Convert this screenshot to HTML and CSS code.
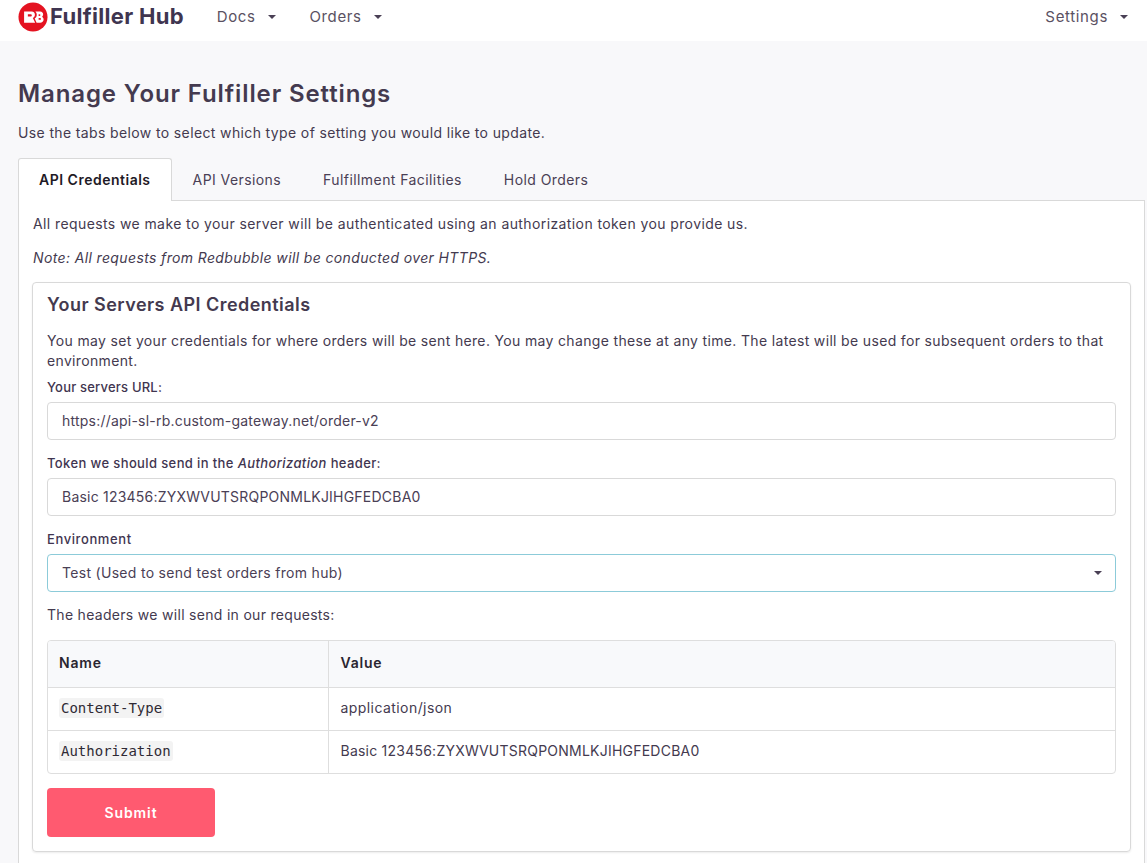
FILE: index.html
```html
<!DOCTYPE html>
<html lang="en">
<head>
<meta charset="utf-8">
<title>Fulfiller Hub</title>
<link rel="stylesheet" href="styles.css">
</head>
<body>
<nav class="navbar">
  <a class="brand">
    <svg class="logo" viewBox="0 0 32 32" aria-hidden="true"><circle cx="16" cy="16" r="15.5" fill="#e41321"/><path fill="#fff" fill-rule="evenodd" d="M6.500 10H14.500C17 10 18 11.800 18 13.500C18 15.300 17 16.500 15.800 17L18.300 22H6.500ZM10.500 13V15.500H13.500A1.250 1.250 0 0 0 13.500 13Z"/><path fill="#fff" fill-rule="evenodd" d="M18.500 10H23.500C25.800 10 26.800 11.500 26.800 13C26.800 14.300 26.300 15.300 25.500 15.800C26.600 16.400 27.300 17.500 27.300 18.600C27.300 20.600 25.800 22 23.500 22H19.800L17.800 17.600C19.300 16.600 20 15.200 20 13.500C20 12 19.500 11 18.500 10ZM22 13V14.800H23A.9.9 0 0 0 23 13ZM22 17V19H23.500A1 1 0 0 0 23.500 17Z"/></svg>
    <span>Fulfiller Hub</span>
  </a>
  <a class="nav-link">Docs<i class="caret"></i></a>
  <a class="nav-link">Orders<i class="caret"></i></a>
  <a class="nav-link nav-end">Settings<i class="caret"></i></a>
</nav>
<main class="page">
  <h1>Manage Your Fulfiller Settings</h1>
  <p class="lead">Use the tabs below to select which type of setting you would like to update.</p>
  <ul class="tabs">
    <li class="tab active">API Credentials</li>
    <li class="tab">API Versions</li>
    <li class="tab">Fulfillment Facilities</li>
    <li class="tab">Hold Orders</li>
  </ul>
  <section class="tab-pane">
    <p class="intro">All requests we make to your server will be authenticated using an authorization token you provide us.</p>
    <p class="intro"><em>Note: All requests from Redbubble will be conducted over HTTPS.</em></p>
    <div class="card">
      <h2>Your Servers API Credentials</h2>
      <p class="card-text">You may set your credentials for where orders will be sent here. You may change these at any time. The latest will be used for subsequent orders to that environment.</p>
      <label class="label first">Your servers URL:</label>
      <div class="input">https://api-sl-rb.custom-gateway.net/order-v2</div>
      <label class="label">Token we should send in the <em>Authorization</em> header:</label>
      <div class="input">Basic 123456:ZYXWVUTSRQPONMLKJIHGFEDCBA0</div>
      <label class="label env">Environment</label>
      <div class="input select">Test (Used to send test orders from hub)<i class="caret small"></i></div>
      <p class="headers-note">The headers we will send in our requests:</p>
      <div class="table-wrap">
        <table>
          <thead><tr><th class="col-name">Name</th><th>Value</th></tr></thead>
          <tbody>
            <tr><td><code>Content-Type</code></td><td class="wide">application/json</td></tr>
            <tr><td><code>Authorization</code></td><td>Basic 123456:ZYXWVUTSRQPONMLKJIHGFEDCBA0</td></tr>
          </tbody>
        </table>
      </div>
      <button class="submit" type="button">Submit</button>
    </div>
  </section>
</main>
</body>
</html>
```
FILE: styles.css
```css
* { box-sizing: border-box; }
html, body { margin: 0; padding: 0; }
body {
  background: #f8f8fa;
  color: #443a4f;
  font-family: "Inter", "Liberation Sans", sans-serif;
  font-size: 14px;
  line-height: 21px;
  letter-spacing: 0.37px;
  height: 863px;
  overflow: hidden;
}
.navbar {
  height: 41px;
  background: #fff;
  display: flex;
  align-items: center;
  padding: 0 19px 8px 18px;
}
.brand { display: flex; align-items: center; gap: 2px; font-weight: 700; font-size: 22px; color: #3f3550; margin-right: 33px; letter-spacing: 0.3px; }
.logo { width: 30px; height: 30px; }
.nav-link { display: flex; align-items: center; font-size: 15px; color: #5a5162; margin-right: 34px; letter-spacing: 0.6px; }
.nav-end { margin-left: auto; margin-right: 0; letter-spacing: 0.65px; }
.caret { display: inline-block; width: 0; height: 0; margin-left: 12px; border-left: 4.500px solid transparent; border-right: 4.500px solid transparent; border-top: 4.500px solid #4a4055; }
.page { padding: 0 2px 0 18px; }
h1 { margin: 38px 0 0; font-size: 24px; line-height: 30px; font-weight: 600; color: #443a4f; letter-spacing: 0.88px; }
.lead { margin: 13px 0 0; line-height: 22px; }
.tabs { list-style: none; margin: 14px 0 0; padding: 0; display: flex; height: 43px; border-bottom: 1px solid #d9d9d9; }
.tab { padding: 10px 20px; border: 1px solid transparent; border-bottom: 0; color: #4a4055; letter-spacing: 0.42px; }
.tab.active { background: #fff; border-color: #d9d9d9; border-radius: 3px 3px 0 0; height: 43px; font-weight: 600; color: #1f1a26; letter-spacing: 0.5px; }
.tab-pane { background: #fff; border: 1px solid #d9d9d9; border-top: 0; padding: 12px 13px 0; height: 700px; }
.intro { margin: 0 0 13px 1px; letter-spacing: 0.4px; }
.intro + .intro { margin-bottom: 14px; letter-spacing: 0.37px; }
.card { border: 1px solid #d9d9d9; border-radius: 4px; box-shadow: 0 1px 2px rgba(0,0,0,.08); padding: 10px 14px 14px; }
h2 { margin: 0; font-size: 18px; line-height: 24px; font-weight: 600; color: #443a4f; letter-spacing: 0.46px; }
.card-text { margin: 14px 0 0; line-height: 20px; letter-spacing: 0.34px; }
.label { display: block; font-size: 13px; font-weight: 500; line-height: 20px; margin-top: 13px; color: #3f3550; letter-spacing: 0.38px; }
.label.first { margin-top: 6px; letter-spacing: 0.2px; }
.label.env { letter-spacing: 0.6px; }
.input { height: 38px; margin-top: 5px; border: 1px solid #d9d9d9; border-radius: 4px; padding: 7px 14px; background: #fff; color: #4a4055; letter-spacing: 0.22px; }
.select { position: relative; border-color: #8ccbd9; letter-spacing: 0.3px; }
.caret.small { position: absolute; right: 13px; top: 16px; margin: 0; border-left-width: 4px; border-right-width: 4px; border-top-width: 4px; }
.headers-note { margin: 12px 0 0; letter-spacing: 0.3px; }
.table-wrap { margin-top: 15px; border: 1px solid #dedede; border-radius: 4px; overflow: hidden; }
table { width: 100%; border-collapse: collapse; }
th { height: 46px; background: #f8f9fb; text-align: left; font-weight: 600; color: #2a2530; padding: 0 11px 2px; border-bottom: 1px solid #dedede; letter-spacing: 0.8px; }
td { height: 43px; padding: 0 11px 2px; border-top: 1px solid #dedede; letter-spacing: 0.23px; }
td.wide { letter-spacing: 0.43px; }
th + th, td + td { border-left: 1px solid #dedede; padding-left: 12px; }
th.col-name { width: 280px; }
tbody tr:first-child td { border-top: 0; }
code { font-family: "DejaVu Sans Mono", monospace; font-size: 14px; letter-spacing: 0; background: #f3f3f3; color: #2f2a35; padding: 2px; border-radius: 3px; }
.submit { display: block; width: 168px; height: 49px; margin-top: 14px; background: #ff5a70; color: #fff; border: 0; border-radius: 4px; font: 600 14px "Inter", sans-serif; letter-spacing: 0.9px; }
```
